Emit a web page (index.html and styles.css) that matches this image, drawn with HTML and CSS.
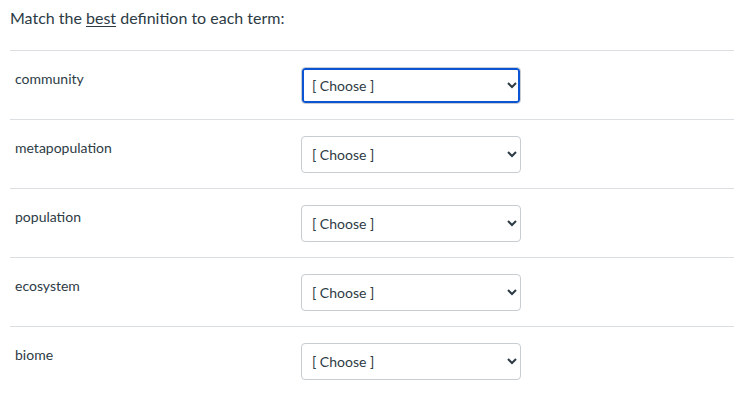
FILE: index.html
```html
<!DOCTYPE html>
<html lang="en">
<head>
<meta charset="utf-8">
<title>Matching question</title>
<link rel="stylesheet" href="styles.css">
</head>
<body>
<div class="question">
  <p class="prompt">Match the <u>best</u> definition to each term:</p>
  <div class="answers">
    <div class="row">
      <div class="term">community</div>
      <select class="choice focused"><option>[ Choose ]</option></select>
    </div>
    <div class="row">
      <div class="term">metapopulation</div>
      <select class="choice"><option>[ Choose ]</option></select>
    </div>
    <div class="row">
      <div class="term">population</div>
      <select class="choice"><option>[ Choose ]</option></select>
    </div>
    <div class="row">
      <div class="term">ecosystem</div>
      <select class="choice"><option>[ Choose ]</option></select>
    </div>
    <div class="row">
      <div class="term">biome</div>
      <select class="choice"><option>[ Choose ]</option></select>
    </div>
  </div>
</div>
</body>
</html>
```

FILE: styles.css
```css
html, body {
  margin: 0;
  padding: 0;
  background: #ffffff;
}
body {
  font-family: Lato, "Noto Sans", "Liberation Sans", sans-serif;
  color: #2d3b45;
}
.question {
  padding: 0 13px 0 10px;
}
.prompt {
  margin: 0;
  padding-top: 6px;
  font-size: 16px;
  line-height: 24px;
  height: 44px;
}
.prompt u {
  text-underline-offset: 2px;
  text-decoration-thickness: 1px;
}
.row {
  display: flex;
  align-items: flex-start;
  border-top: 1px solid #dcdfe2;
  height: 68px;
}
.term {
  width: 286px;
  padding: 18px 0 0 5px;
  font-size: 14px;
  line-height: 20px;
}
.choice {
  margin-top: 16px;
  width: 220px;
  height: 37px;
  padding: 0 4px 0 6px;
  font-family: Lato, "Noto Sans", "Liberation Sans", sans-serif;
  font-size: 14px;
  color: #2d3b45;
  background: #ffffff;
  border: 1px solid #c7cdd1;
  border-radius: 4px;
  outline: none;
}
.choice.focused {
  box-shadow: inset 0 0 0 2px #0b55d4;
}
```
